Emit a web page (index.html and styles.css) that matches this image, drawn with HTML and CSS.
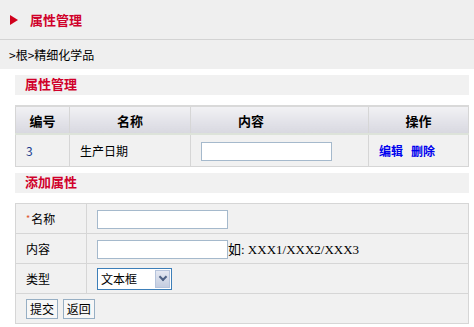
FILE: index.html
```html
<!DOCTYPE html>
<html lang="zh-CN">
<head>
    <meta charset="UTF-8">
    <title>属性管理</title>
    <link rel="stylesheet" href="styles.css">
</head>
<body>
    <div class="topbar">
        <span class="arrow"></span>
        <h1>属性管理</h1>
    </div>
    <div class="crumb">&gt;根&gt;精细化学品</div>

    <div class="main">
        <h2 class="section">属性管理</h2>
        <table class="list">
            <colgroup>
                <col style="width:54px">
                <col style="width:121px">
                <col style="width:178px">
                <col>
            </colgroup>
            <tr>
                <th>编号</th>
                <th>名称</th>
                <th class="th-content">内容</th>
                <th>操作</th>
            </tr>
            <tr>
                <td class="num">3</td>
                <td>生产日期</td>
                <td><input type="text" class="txt"></td>
                <td class="ops"><a href="#">编辑</a><a href="#">删除</a></td>
            </tr>
        </table>

        <h2 class="section">添加属性</h2>
        <table class="form">
            <colgroup>
                <col style="width:71px">
                <col>
            </colgroup>
            <tr>
                <td><span class="req">*</span>名称</td>
                <td><input type="text" class="txt"></td>
            </tr>
            <tr>
                <td>内容</td>
                <td><input type="text" class="txt"><span class="hint">如: XXX1/XXX2/XXX3</span></td>
            </tr>
            <tr>
                <td>类型</td>
                <td>
                    <span class="select">
                        <select>
                            <option>文本框</option>
                        </select>
                        <span class="drop"></span>
                    </span>
                </td>
            </tr>
            <tr>
                <td colspan="2" class="btns">
                    <button>提交</button>
                    <button>返回</button>
                </td>
            </tr>
        </table>
    </div>
</body>
</html>
```

FILE: styles.css
```css
/* page */
body {
    margin: 0;
    background: #fff;
    font-family: "Noto Sans CJK SC", sans-serif;
    font-size: 12px;
    color: #000;
}

.topbar {
    height: 39px;
    background: #efefef;
    border-bottom: 1px solid #d3d3d3;
    display: flex;
    align-items: center;
    padding-left: 10px;
}

.arrow {
    width: 0;
    height: 0;
    border-top: 5px solid transparent;
    border-bottom: 5px solid transparent;
    border-left: 8px solid #d0001c;
    margin-right: 12px;
}

.topbar h1 {
    margin: 0;
    font-size: 13px;
    color: #d0002a;
    font-weight: bold;
}

.crumb {
    height: 29px;
    line-height: 29px;
    background: #efefef;
    padding-left: 9px;
}

.main {
    padding: 6px 5px 0 15px;
}

.section {
    margin: 0;
    height: 20px;
    line-height: 18px;
    background: #f1f1f1;
    color: #d0002a;
    font-size: 13px;
    font-weight: bold;
    padding-left: 10px;
}

/* list table */
table {
    width: 100%;
    border-collapse: collapse;
    table-layout: fixed;
    margin: 10px 0 6px;
}

.list th {
    height: 26px;
    background: linear-gradient(#f1f1f4, #d8d8e0);
    border: 1px solid #d6d6d6;
    border-top: 2px solid #d9d9d9;
    border-bottom: 2px solid #dde3da;
    font-size: 13px;
    font-weight: bold;
    text-align: center;
    padding: 0;
}

.list th.th-content {
    text-align: left;
    padding-left: 47px;
}

.list td {
    height: 31px;
    background: #f1f1f1;
    border: 1px solid #d6d6d6;
    padding: 0 0 0 10px;
}

.list td.num {
    color: #1b3d8f;
}

.ops a {
    color: #0000ee;
    font-weight: bold;
    font-size: 12px;
    text-decoration: none;
    margin-right: 8px;
}

.txt {
    width: 131px;
    height: 19px;
    box-sizing: border-box;
    border: 1px solid #a5b9cc;
    background: #fff;
    padding: 0;
    margin: 0;
    vertical-align: middle;
}

/* add form */
.form {
    margin-bottom: 0;
}

.form td {
    height: 29px;
    background: #f1f1f1;
    border: 1px solid #d6d6d6;
    padding: 0 0 0 10px;
}

.req {
    color: #e0552a;
    font-size: 9px;
    vertical-align: 2px;
    margin-right: 1px;
}

.hint {
    font-family: "Liberation Serif", "Noto Sans CJK SC", serif;
    font-size: 13px;
    vertical-align: middle;
}

.select {
    position: relative;
    display: inline-block;
    vertical-align: middle;
}

.select select {
    appearance: none;
    -webkit-appearance: none;
    width: 75px;
    height: 22px;
    border: 1px solid #3d7fb9;
    background: #fff;
    font-family: "Noto Sans CJK SC", sans-serif;
    font-size: 12px;
    padding: 0 0 0 3px;
    margin: 0;
    border-radius: 0;
    color: #000;
}

.drop {
    position: absolute;
    right: 2px;
    top: 2px;
    width: 15px;
    height: 18px;
    box-sizing: border-box;
    border: 1px solid #b6c4dc;
    background: linear-gradient(#e4e8f2, #c4cde0);
    display: flex;
    align-items: center;
    justify-content: center;
}

.drop::after {
    content: "";
    width: 4px;
    height: 4px;
    border-right: 2px solid #4d6185;
    border-bottom: 2px solid #4d6185;
    transform: translateY(-2px) rotate(45deg);
}

.btns {
    height: 30px;
}

.btns button {
    height: 20px;
    padding: 0 3px;
    margin: 0 2px 0 0;
    border: 1px solid #97afc4;
    background: #f7f7f7;
    font-family: "Noto Sans CJK SC", sans-serif;
    font-size: 12px;
    line-height: 16px;
    color: #000;
}
```
